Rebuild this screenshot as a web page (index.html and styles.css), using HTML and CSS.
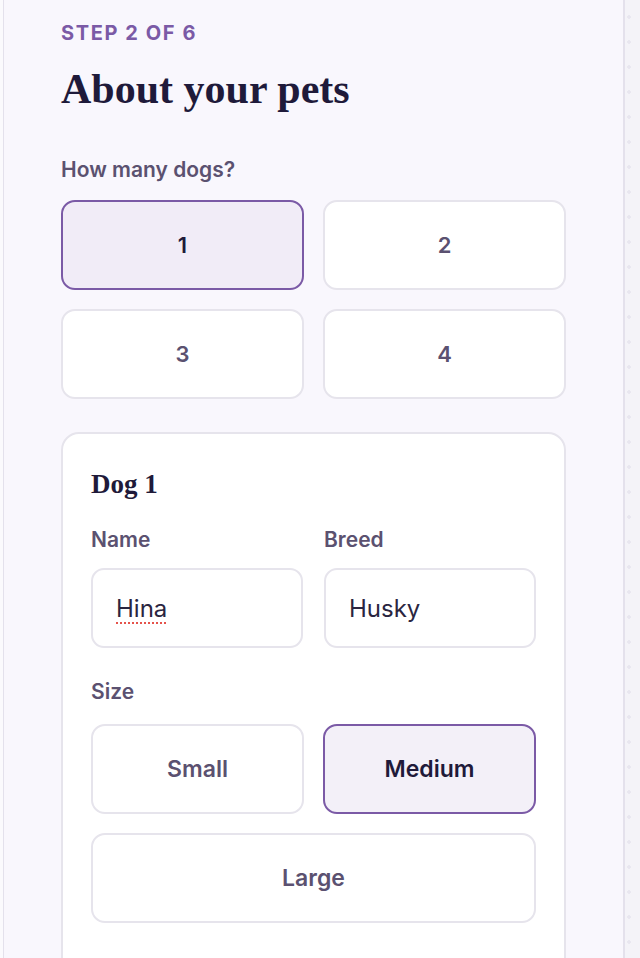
FILE: index.html
```html
<!DOCTYPE html>
<html lang="en">
<head>
<meta charset="utf-8">
<title>About your pets</title>
<link rel="stylesheet" href="styles.css">
</head>
<body>
<div class="frame">
  <div class="edge-left"></div>
  <main class="panel">
    <p class="step">STEP 2 OF 6</p>
    <h1 class="title">About your pets</h1>
    <p class="label label-top">How many dogs?</p>
    <div class="grid count-grid">
      <button class="choice selected">1</button>
      <button class="choice">2</button>
      <button class="choice">3</button>
      <button class="choice">4</button>
    </div>
    <section class="card">
      <h2 class="card-title">Dog 1</h2>
      <div class="fields">
        <div class="field-group">
          <p class="label">Name</p>
          <div class="input"><span class="misspelled">Hina</span></div>
        </div>
        <div class="field-group">
          <p class="label">Breed</p>
          <div class="input">Husky</div>
        </div>
      </div>
      <p class="label label-size">Size</p>
      <div class="grid size-grid">
        <button class="choice size">Small</button>
        <button class="choice size selected">Medium</button>
        <button class="choice size wide">Large</button>
      </div>
    </section>
  </main>
  <div class="edge-right"></div>
</div>
</body>
</html>
```
FILE: styles.css
```css
* { box-sizing: border-box; }
html, body {
  margin: 0;
  padding: 0;
  height: 100%;
  overflow: hidden;
}
body {
  font-family: Inter, "Open Sans", sans-serif;
  background: #fbfafd;
  color: #1f1a3a;
}
.frame {
  display: flex;
  height: 958px;
}
.edge-left {
  width: 3px;
  flex: none;
  background: #fbfafd;
}
.panel {
  flex: 1;
  background: #f9f7fd;
  border-left: 1px solid #e4e1ec;
  border-right: 2px solid #e4e1ec;
  padding: 20px 57px 0;
  overflow: hidden;
}
.edge-right {
  width: 15px;
  flex: none;
  background-color: #f4f3f8;
  background-image: radial-gradient(circle at 4px 17px, #e8e6ef 1.5px, transparent 2px);
  background-size: 15px 25px;
}
.step {
  margin: 0;
  font-size: 20px;
  line-height: 26px;
  font-weight: 700;
  letter-spacing: 1.6px;
  color: #7b5aa6;
}
.title {
  margin: 19px 0 0;
  font-family: "Liberation Serif", "DejaVu Serif", serif;
  font-size: 42px;
  line-height: 48px;
  font-weight: 700;
  color: #1f1a3a;
}
.label {
  margin: 0;
  font-size: 21px;
  line-height: 24px;
  font-weight: 600;
  color: #5b5170;
}
.label-top { margin-top: 45px; }
.grid {
  display: grid;
  grid-template-columns: 1fr 1fr;
  gap: 19px;
}
.count-grid { margin-top: 18px; }
.choice {
  height: 90px;
  border: 2px solid #e6e4ec;
  border-radius: 14px;
  background: #ffffff;
  font-family: Inter, "Open Sans", sans-serif;
  font-size: 22px;
  font-weight: 600;
  color: #5b5170;
  padding: 0;
}
.choice.selected {
  border-color: #7b5aa6;
  background: #f1ecf7;
  color: #1f1a3a;
}
.size { font-size: 23px; }
.size.selected { background: #f3f0f8; }
.wide { grid-column: 1 / -1; }
.card {
  margin-top: 33px;
  background: #ffffff;
  border: 2px solid #e6e4ec;
  border-radius: 18px;
  padding: 30px 28px 80px;
}
.card-title {
  margin: 0;
  font-family: "Liberation Serif", "DejaVu Serif", serif;
  font-size: 27px;
  line-height: 40px;
  font-weight: 700;
  color: #1f1a3a;
}
.fields {
  margin-top: 24px;
  display: grid;
  grid-template-columns: 1fr 1fr;
  gap: 21px;
}
.field-group .label { margin-bottom: 16px; }
.input {
  height: 80px;
  border: 2px solid #e6e4ec;
  border-radius: 13px;
  padding: 0 23px;
  display: flex;
  align-items: center;
  font-size: 24px;
  color: #2a2540;
}
.misspelled {
  text-decoration: underline dotted #e5534b;
  text-decoration-thickness: 2px;
  text-underline-offset: 6px;
}
.label-size { margin-top: 32px; }
.size-grid { margin-top: 20px; }
```
